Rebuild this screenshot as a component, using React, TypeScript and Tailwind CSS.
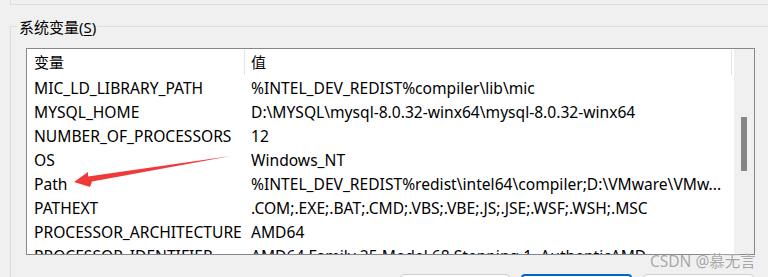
import React from "react";

const rows: [string, string][] = [
  ["MIC_LD_LIBRARY_PATH", "%INTEL_DEV_REDIST%compiler\\lib\\mic"],
  ["MYSQL_HOME", "D:\\MYSQL\\mysql-8.0.32-winx64\\mysql-8.0.32-winx64"],
  ["NUMBER_OF_PROCESSORS", "12"],
  ["OS", "Windows_NT"],
  ["Path", "%INTEL_DEV_REDIST%redist\\intel64\\compiler;D:\\VMware\\VMw..."],
  ["PATHEXT", ".COM;.EXE;.BAT;.CMD;.VBS;.VBE;.JS;.JSE;.WSF;.WSH;.MSC"],
  ["PROCESSOR_ARCHITECTURE", "AMD64"],
  ["PROCESSOR_IDENTIFIER", "AMD64 Family 25 Model 68 Stepping 1, AuthenticAMD"],
];

export default function App() {
  return (
    <div
      className="relative w-[768px] h-[277px] overflow-hidden bg-[#f0f0f0] text-black text-[15px]"
      style={{ fontFamily: '"Noto Sans", "Noto Sans CJK SC", sans-serif' }}
    >
      {/* bottom of previous group box */}
      <div className="h-[5px] ml-[10px] border-l border-b border-[#dcdcdc]" />

      {/* system variables group */}
      <div className="mt-[21px] ml-[10px] h-[300px] border-t border-l border-[#dcdcdc] flex flex-col">
        <div className="-mt-[12px] ml-[6px] w-fit px-[2px] h-[24px] leading-[24px] bg-[#f0f0f0]">
          系统变量(<span className="underline underline-offset-2">S</span>)
        </div>

        <div className="mt-[9px] ml-[15px] w-[729px] h-[207px] border border-[#828790] bg-white flex overflow-hidden">
          <div className="w-[706px] flex flex-col text-[15.6px]">
            {/* header */}
            <div className="h-[27px] flex shrink-0 text-[15px]">
              <div className="w-[217px] pl-[7px] leading-[27px]">变量</div>
              <div className="w-px mt-[1px] h-[25px] bg-[#e5e5e5]" />
              <div className="flex-1 pl-[6px] leading-[27px]">值</div>
              <div className="w-px mt-[1px] h-[25px] bg-[#e5e5e5] mr-[1px]" />
            </div>
            {rows.map(([k, v]) => (
              <div key={k} className="h-[24px] flex shrink-0 leading-[24px] whitespace-nowrap">
                <div className="w-[217px] pl-[7px] overflow-hidden">{k}</div>
                <div className="w-px" />
                <div className="flex-1 pl-[6px] overflow-hidden">{v}</div>
              </div>
            ))}
          </div>
          {/* scrollbar */}
          <div className="flex-1 bg-[#f0f0f0] ml-[1px] flex flex-col">
            <div className="mt-[68px] ml-[7px] w-[6px] h-[54px] bg-[#858585]" />
          </div>
        </div>

        {/* buttons */}
        <div className="mt-[19px] ml-[15px] w-[728px] flex justify-end gap-[11px]">
          <div className="w-[110px] h-[26px] rounded-[4px] border border-[#d0d0d0] bg-[#fdfdfd]" />
          <div className="w-[111px] h-[26px] rounded-[4px] border-2 border-[#0067c0] bg-[#fdfdfd]" />
          <div className="w-[111px] h-[26px] rounded-[4px] border border-[#d0d0d0] bg-[#fdfdfd]" />
        </div>
      </div>

      {/* red annotation arrow */}
      <svg className="absolute left-0 top-0 pointer-events-none" width="768" height="277">
        <polygon
          points="74,182 88,172 88,176.5 231,156 92,181.5 90,187"
          fill="#f03a3a"
        />
      </svg>

      {/* watermark */}
      <div
        className="absolute left-[650px] top-[252px] text-[15.5px] leading-[18px] text-[#a6a6a6] whitespace-nowrap"
        style={{ fontFamily: '"Noto Sans", "Noto Sans CJK SC", sans-serif', textShadow: "0 0 1px #ffffff" }}
      >
        CSDN @慕无言
      </div>
    </div>
  );
}
